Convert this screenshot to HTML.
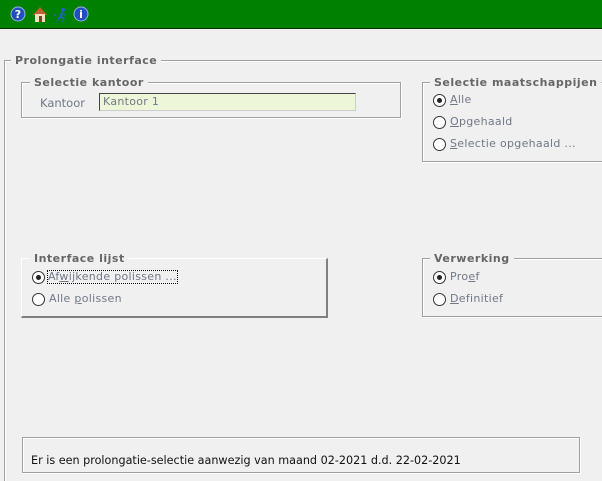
<!DOCTYPE html>
<html><head><style>
*{margin:0;padding:0;box-sizing:border-box}
html{overflow:hidden;width:602px;height:481px}
body{width:602px;height:481px;background:#f0f0f0;position:relative;overflow:hidden;font-family:"DejaVu Sans","Liberation Sans",sans-serif;font-size:10px;color:#6a7080}
.a{position:absolute}
.hdr{left:0;top:0;width:602px;height:29px;background:#008000;border-bottom:1px solid #003000}
.etch{position:absolute;border:1px solid #a0a0a0;box-shadow:1px 1px 0 #fff, inset 1px 1px 0 #fff}
.lg{position:absolute;background:#f0f0f0;padding:0 4px;font-weight:bold;color:#666;font-size:11px;letter-spacing:0.5px;line-height:13px}
.rb{position:absolute;width:13px;height:13px;border-radius:50%;border:1px solid #333;background:#fff}
.rb.on::after{content:"";position:absolute;left:3px;top:3px;width:5px;height:5px;border-radius:50%;background:#222}
.t{position:absolute;font-size:11px;letter-spacing:0.3px;line-height:12px;color:#707888}
u{text-decoration:underline}
</style></head><body>
<div class="a hdr"></div>
<svg class="a" style="left:10px;top:6px" width="80" height="18">
<circle cx="8" cy="8" r="7" fill="#2050c0" stroke="#a0b0e0"/><text x="8" y="12" fill="#fff" font-size="11" font-weight="bold" text-anchor="middle" font-family="DejaVu Sans">?</text>
<path d="M23 9 L30 1 L37 9 Z" fill="#c06030"/><rect x="25" y="8" width="10" height="8" fill="#f0e0c0"/><rect x="29" y="10" width="3" height="6" fill="#804020"/>
<circle cx="53" cy="4" r="2" fill="#2060c0"/><path d="M52 6 L50 11 L54 12 L53 16 M50 11 L47 15 M52 8 L56 9 M44 8 L46 10" stroke="#2060c0" stroke-width="1.5" fill="none"/>
<circle cx="71" cy="8" r="7" fill="#2050c0" stroke="#a0b0e0"/><text x="71" y="12" fill="#fff" font-size="11" font-weight="bold" text-anchor="middle" font-family="DejaVu Sans">i</text>
</svg>
<div class="a" style="left:4px;top:60px;width:600px;height:421px;border-left:1px solid #a0a0a0;border-top:1px solid #a0a0a0;box-shadow:inset 1px 1px 0 #fff"></div>
<div class="lg" style="left:11px;top:54px">Prolongatie interface</div>
<div class="etch" style="left:21px;top:82px;width:380px;height:36px"></div>
<div class="lg" style="left:30px;top:76px">Selectie kantoor</div>
<div class="t" style="left:40px;top:97px;font-size:11.5px;letter-spacing:0">Kantoor</div>
<div class="a" style="left:99px;top:93px;width:257px;height:18px;background:#eef6d8;border:1px solid #444;border-right-color:#ccc;border-bottom-color:#ccc;padding:2px 3px;font-size:11px;letter-spacing:0.3px;line-height:12px;color:#707888">Kantoor 1</div>
<div class="etch" style="left:422px;top:82px;width:200px;height:80px"></div>
<div class="lg" style="left:430px;top:76px">Selectie maatschappijen</div>
<div class="rb on" style="left:433px;top:94px"></div><div class="t" style="left:450px;top:94px"><u>A</u>lle</div>
<div class="rb" style="left:433px;top:116px"></div><div class="t" style="left:450px;top:116px"><u>O</u>pgehaald</div>
<div class="rb" style="left:433px;top:138px"></div><div class="t" style="left:450px;top:138px"><u>S</u>electie opgehaald ...</div>
<div class="a" style="left:21px;top:258px;width:307px;height:60px;border:1px solid #fff;border-right:2px solid #808080;border-bottom:2px solid #808080"></div>
<div class="lg" style="left:30px;top:252px">Interface lijst</div>
<div class="rb on" style="left:32px;top:271px"></div><div class="t" style="left:48px;top:271px;outline:1px dotted #000">Af<u>w</u>ijkende polissen ...</div>
<div class="rb" style="left:32px;top:293px"></div><div class="t" style="left:49px;top:293px">Alle <u>p</u>olissen</div>
<div class="etch" style="left:422px;top:258px;width:200px;height:59px"></div>
<div class="lg" style="left:430px;top:252px">Verwerking</div>
<div class="rb on" style="left:433px;top:271px"></div><div class="t" style="left:450px;top:271px">Pro<u>e</u>f</div>
<div class="rb" style="left:433px;top:293px"></div><div class="t" style="left:450px;top:293px"><u>D</u>efinitief</div>
<div class="etch" style="left:22px;top:437px;width:558px;height:36px"></div>
<div class="a" style="left:31px;top:455px;font-size:11.2px;letter-spacing:0;line-height:12px;color:#111">Er is een prolongatie-selectie aanwezig van maand 02-2021 d.d. 22-02-2021</div>
</body></html>
